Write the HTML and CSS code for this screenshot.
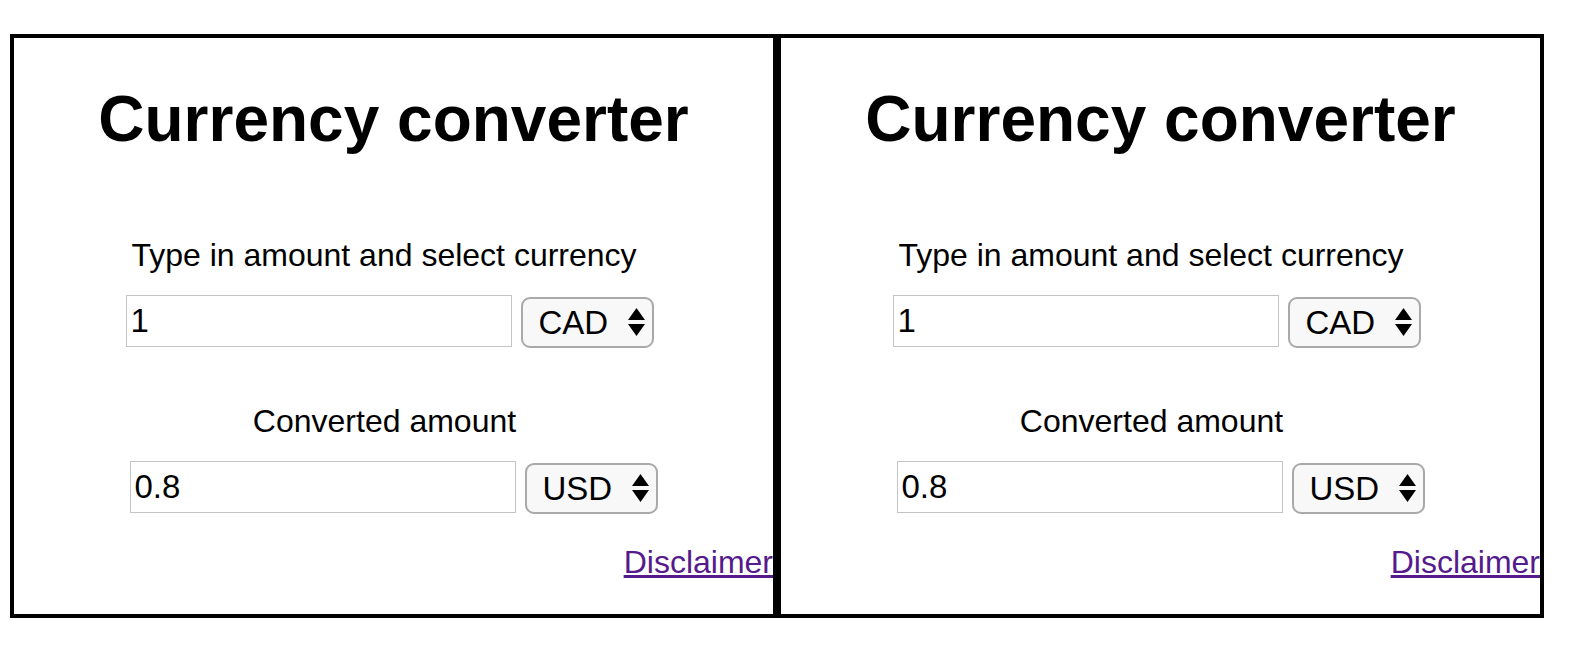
FILE: index.html
```html
<!DOCTYPE html>
<html lang="en">
<head>
<meta charset="utf-8">
<title>Currency converter</title>
<link rel="stylesheet" href="styles.css">
</head>
<body>
<div class="page">
  <section class="panel">
    <h1 class="title">Currency converter</h1>
    <p class="label label-first">Type in amount and select currency</p>
    <div class="row row-first">
      <input class="amount" type="text" value="1">
      <div class="select-wrap">
        <select class="currency"><option>CAD</option></select>
        <svg class="arrows" width="19" height="30" viewBox="0 0 19 30"><path d="M9.5 1 L18 13 L1 13 Z M1 17 L18 17 L9.5 29 Z" fill="#000"/></svg>
      </div>
    </div>
    <p class="label label-second">Converted amount</p>
    <div class="row row-second">
      <input class="amount" type="text" value="0.8">
      <div class="select-wrap">
        <select class="currency"><option>USD</option></select>
        <svg class="arrows" width="19" height="30" viewBox="0 0 19 30"><path d="M9.5 1 L18 13 L1 13 Z M1 17 L18 17 L9.5 29 Z" fill="#000"/></svg>
      </div>
    </div>
    <div class="footer"><a class="disclaimer" href="#">Disclaimer</a></div>
  </section>
  <section class="panel">
    <h1 class="title">Currency converter</h1>
    <p class="label label-first">Type in amount and select currency</p>
    <div class="row row-first">
      <input class="amount" type="text" value="1">
      <div class="select-wrap">
        <select class="currency"><option>CAD</option></select>
        <svg class="arrows" width="19" height="30" viewBox="0 0 19 30"><path d="M9.5 1 L18 13 L1 13 Z M1 17 L18 17 L9.5 29 Z" fill="#000"/></svg>
      </div>
    </div>
    <p class="label label-second">Converted amount</p>
    <div class="row row-second">
      <input class="amount" type="text" value="0.8">
      <div class="select-wrap">
        <select class="currency"><option>USD</option></select>
        <svg class="arrows" width="19" height="30" viewBox="0 0 19 30"><path d="M9.5 1 L18 13 L1 13 Z M1 17 L18 17 L9.5 29 Z" fill="#000"/></svg>
      </div>
    </div>
    <div class="footer"><a class="disclaimer" href="#">Disclaimer</a></div>
  </section>
</div>
</body>
</html>
```
FILE: styles.css
```css
html, body {
  margin: 0;
  padding: 0;
  background: #fff;
}
body {
  font-family: "Liberation Sans", Arial, Helvetica, sans-serif;
  color: #000;
}
.page {
  display: flex;
  padding: 34px 0 0 10px;
}
.panel {
  box-sizing: border-box;
  width: 767px;
  height: 584px;
  border: 4px solid #000;
  display: flex;
  flex-direction: column;
}
.title {
  margin: 44px 0 0 0;
  font-size: 64px;
  line-height: 74px;
  font-weight: bold;
  text-align: center;
}
.label {
  margin: 0;
  font-size: 32px;
  line-height: 37px;
  text-align: center;
}
.label-first {
  margin-top: 81px;
  padding-right: 19px;
}
.label-second {
  margin-top: 55px;
  padding-right: 18px;
}
.row {
  display: flex;
  justify-content: center;
  align-items: flex-start;
  gap: 9px;
  margin-top: 21px;
}
.row-first {
  padding-right: 8px;
}
.amount {
  box-sizing: border-box;
  width: 386px;
  height: 52px;
  margin: 0;
  padding: 0 4px;
  border: 1px solid #c4c4c4;
  border-radius: 0;
  font-family: "Liberation Sans", Arial, Helvetica, sans-serif;
  font-size: 33px;
  color: #000;
  background: #fff;
  outline: none;
}
.select-wrap {
  position: relative;
  margin-top: 2px;
}
.currency {
  box-sizing: border-box;
  width: 133px;
  height: 51px;
  margin: 0;
  padding: 0 0 0 16px;
  border: 2px solid #a9a9a9;
  border-radius: 9px;
  background: #f8f8f8;
  font-family: "Liberation Sans", Arial, Helvetica, sans-serif;
  font-size: 33px;
  color: #000;
  appearance: none;
  -webkit-appearance: none;
  outline: none;
}
.arrows {
  position: absolute;
  right: 8px;
  top: 10px;
  pointer-events: none;
}
.footer {
  margin-top: 30px;
  text-align: right;
  font-size: 32px;
  line-height: 37px;
}
.disclaimer {
  color: #551a8b;
  text-decoration: underline;
}
```
